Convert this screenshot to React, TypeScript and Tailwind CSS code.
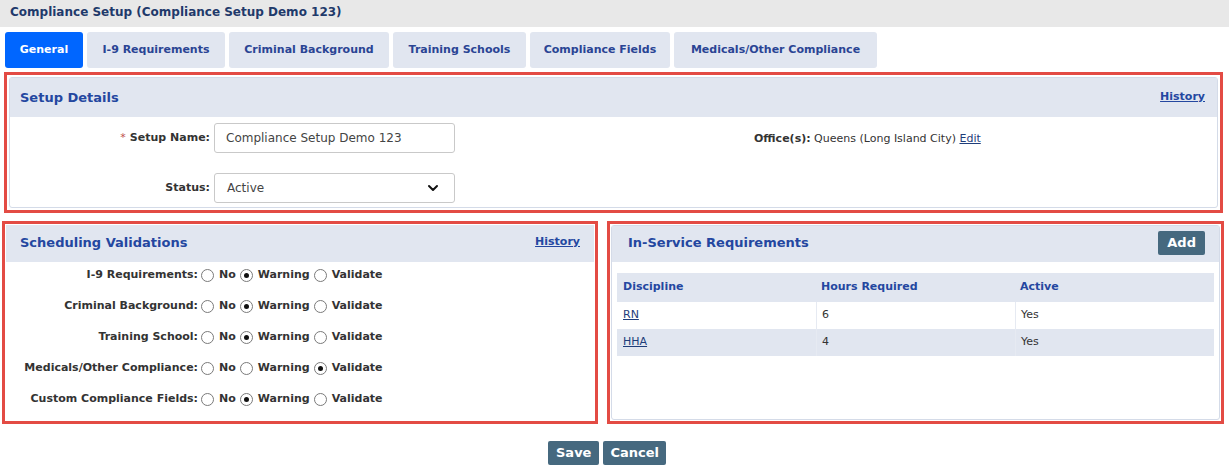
import React from 'react';
import { ChevronDown } from 'lucide-react';

const tabs = [
  { name: 'General', width: 'w-[78px]' },
  { name: 'I-9 Requirements', width: 'w-[138px]' },
  { name: 'Criminal Background', width: 'w-[160px]' },
  { name: 'Training Schools', width: 'w-[133px]' },
  { name: 'Compliance Fields', width: 'w-[140px]' },
  { name: 'Medicals/Other Compliance', width: 'w-[203px]' }
];

const validations = [
  { label: 'I-9 Requirements:', value: 'Warning' },
  { label: 'Criminal Background:', value: 'Warning' },
  { label: 'Training School:', value: 'Warning' },
  { label: 'Medicals/Other Compliance:', value: 'Validate' },
  { label: 'Custom Compliance Fields:', value: 'Warning' }
];

const requirements = [
  { discipline: 'RN', hours: '6', active: 'Yes' },
  { discipline: 'HHA', hours: '4', active: 'Yes' }
];

const Radio = ({ checked }: { checked: boolean }) => <span className="w-[13px] h-[13px] rounded-full border border-[#7a7a7a] bg-white flex items-center justify-center shrink-0">
    {checked && <span className="w-[5px] h-[5px] rounded-full bg-[#111]"></span>}
  </span>;

const App = () => {
  return <div className="w-[1229px] h-[467px] bg-white font-['DejaVu_Sans',Verdana,sans-serif] text-[#333] overflow-hidden">
      {/* Title bar */}
      <div className="h-[27px] bg-[#e8e8e8] flex items-center px-[10px]">
        <h1 className="text-[12px] font-bold text-[#1f3a6b] -mt-[3px]">Compliance Setup (Compliance Setup Demo 123)</h1>
      </div>

      {/* Tabs */}
      <div className="flex gap-[4px] pl-[5px] mt-[5px]">
        {tabs.map((tab, i) => <div key={tab.name} className={`${tab.width} h-[36px] rounded-[3px] flex items-center justify-center text-[11px] font-bold ${i === 0 ? 'bg-[#0066ff] text-white' : 'bg-[#e1e6f0] text-[#2a4494]'}`}>
            {tab.name}
          </div>)}
      </div>

      {/* Setup details */}
      <div className="mt-[4px] ml-[4px] mr-[6px] h-[141px] border-[3px] border-[#e34b44] p-[2px]">
        <div className="h-full border border-[#d4dbe8] rounded-[3px]">
          <div className="h-[39px] bg-[#e1e6f0] flex items-center justify-between pl-[10px] pr-[12px]">
            <span className="text-[13px] font-bold text-[#2447a0]">Setup Details</span>
            <a className="text-[11px] font-bold text-[#2447a0] underline">History</a>
          </div>
          <div className="flex">
            <div className="w-[744px] flex flex-col">
              <div className="flex items-center h-[30px] mt-[6px]">
                <div className="w-[204px] text-right text-[11px] font-bold pr-[4px]">
                  <span className="text-[#c0504d] font-normal mr-[4px]">*</span>Setup Name:
                </div>
                <div className="w-[241px] h-[30px] border border-[#c9c9c9] rounded-[3px] flex items-center px-[11px] text-[12px] text-[#444]">
                  Compliance Setup Demo 123
                </div>
              </div>
              <div className="flex items-center h-[30px] mt-[20px]">
                <div className="w-[204px] text-right text-[11px] font-bold pr-[4px]">Status:</div>
                <div className="w-[241px] h-[30px] border border-[#c9c9c9] rounded-[3px] flex items-center justify-between pl-[12px] pr-[13px] text-[12px] text-[#444]">
                  Active
                  <ChevronDown size={16} strokeWidth={3} className="text-[#111]" />
                </div>
              </div>
            </div>
            <div className="pt-[14px] text-[11px]">
              <span className="font-bold">Office(s):</span> Queens (Long Island City) <a className="text-[#1f3d7a] underline">Edit</a>
            </div>
          </div>
        </div>
      </div>

      {/* Bottom panels */}
      <div className="flex gap-[9px] mt-[8px] ml-[2px]">
        <div className="w-[596px] h-[203px] border-[3px] border-[#e34b44] p-px">
          <div className="h-full">
            <div className="h-[37px] bg-[#e1e6f0] flex items-center justify-between pl-[14px] pr-[14px]">
              <span className="text-[13px] font-bold text-[#2447a0] -mt-[2px]">Scheduling Validations</span>
              <a className="text-[11px] font-bold text-[#2447a0] underline -mt-[2px]">History</a>
            </div>
            <div className="flex flex-col gap-[11px] pt-[3px]">
              {validations.map(row => <div key={row.label} className="flex items-center h-[20px] text-[11px] font-bold">
                  <div className="w-[195px] text-right pr-[3px]">{row.label}</div>
                  {['No', 'Warning', 'Validate'].map(opt => <div key={opt} className="flex items-center gap-[5px] mr-[4px]">
                      <Radio checked={row.value === opt} />
                      <span>{opt}</span>
                    </div>)}
                </div>)}
            </div>
          </div>
        </div>

        <div className="w-[617px] h-[203px] border-[3px] border-[#e34b44] p-px">
          <div className="h-full border border-[#d4dbe8] rounded-[3px]">
            <div className="h-[36px] bg-[#e1e6f0] flex items-center justify-between pl-[16px] pr-[14px]">
              <span className="text-[13px] font-bold text-[#2447a0] -mt-[2px]">In-Service Requirements</span>
              <button className="h-[24px] px-[9px] bg-[#46697f] text-white text-[13px] font-bold rounded-[2px] -mt-[2px]">Add</button>
            </div>
            <div className="px-[5px] pt-[11px]">
              <div className="grid grid-cols-3 bg-[#e1e6f0] h-[29px] items-center text-[11px] font-bold text-[#2447a0]">
                <div className="pl-[6px]">Discipline</div>
                <div className="pl-[5px]">Hours Required</div>
                <div className="pl-[5px]">Active</div>
              </div>
              {requirements.map((r, i) => <div key={r.discipline} className={`grid grid-cols-3 h-[27px] text-[11px] ${i % 2 === 0 ? 'bg-white' : 'bg-[#e1e6f0]'}`}>
                  <div className="pl-[6px] flex items-center"><a className="text-[#1f3d7a] underline">{r.discipline}</a></div>
                  <div className="pl-[5px] flex items-center border-l border-[#e6eaf2]">{r.hours}</div>
                  <div className="pl-[5px] flex items-center border-l border-[#e6eaf2]">{r.active}</div>
                </div>)}
            </div>
          </div>
        </div>
      </div>

      {/* Actions */}
      <div className="flex justify-center gap-[4px] mt-[17px] pr-[15px]">
        <button className="h-[24px] px-[8px] bg-[#46697f] text-white text-[13px] font-bold rounded-[2px]">Save</button>
        <button className="h-[24px] px-[7px] bg-[#46697f] text-white text-[13px] font-bold rounded-[2px]">Cancel</button>
      </div>
    </div>;
};

export default App;
